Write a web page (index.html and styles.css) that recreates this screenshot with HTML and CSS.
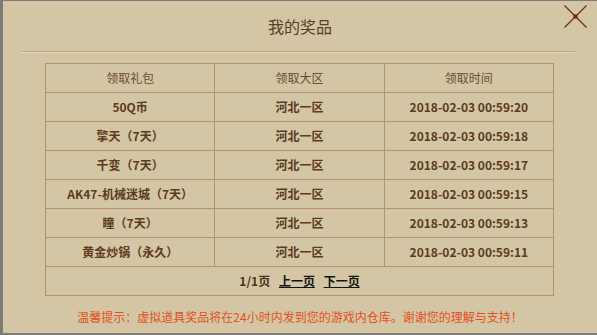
FILE: index.html
```html
<!DOCTYPE html>
<html lang="zh">
<head>
<meta charset="utf-8">
<title>我的奖品</title>
<link rel="stylesheet" href="styles.css">
</head>
<body>
<div class="backdrop">
  <div class="panel">
    <div class="head">
      <h1 class="title">我的奖品</h1>
      <button class="close" aria-label="关闭">
        <svg width="25" height="25" viewBox="0 0 25 25">
          <path d="M1.5 1.5 L23.5 23.5 M23.5 1.5 L1.5 23.5" stroke="#6a2a10" stroke-width="1.1" fill="none"/>
          <rect x="10.5" y="10.5" width="4" height="4" fill="#6a2a10"/>
        </svg>
      </button>
    </div>
    <div class="rule"></div>
    <table class="prizes">
      <thead>
        <tr><th>领取礼包</th><th>领取大区</th><th>领取时间</th></tr>
      </thead>
      <tbody>
        <tr><td>50Q币</td><td>河北一区</td><td>2018-02-03 00:59:20</td></tr>
        <tr><td>擎天（7天）</td><td>河北一区</td><td>2018-02-03 00:59:18</td></tr>
        <tr><td>千变（7天）</td><td>河北一区</td><td>2018-02-03 00:59:17</td></tr>
        <tr><td>AK47-机械迷城（7天）</td><td>河北一区</td><td>2018-02-03 00:59:15</td></tr>
        <tr><td>瞳（7天）</td><td>河北一区</td><td>2018-02-03 00:59:13</td></tr>
        <tr><td>黄金炒锅（永久）</td><td>河北一区</td><td>2018-02-03 00:59:11</td></tr>
        <tr class="pager"><td colspan="3">1/1页 <a href="#">上一页</a> <a href="#">下一页</a></td></tr>
      </tbody>
    </table>
    <p class="tip">温馨提示：虚拟道具奖品将在24小时内发到您的游戏内仓库。谢谢您的理解与支持！</p>
  </div>
</div>
</body>
</html>
```

FILE: styles.css
```css
html, body {
  margin: 0;
  padding: 0;
  width: 597px;
  height: 335px;
  overflow: hidden;
  background: #7d7b78;
  font-family: "Noto Sans CJK SC", "Noto Sans", sans-serif;
}
.backdrop {
  padding: 1px 0 0 3px;
}
.panel {
  background: #d4c6a4;
  height: 332px;
  box-sizing: border-box;
  padding: 0;
  display: flex;
  flex-direction: column;
}
.head {
  height: 50px;
  position: relative;
  display: flex;
  align-items: center;
  justify-content: center;
}
.title {
  margin: 0;
  font-size: 16px;
  font-weight: normal;
  color: #5a3e2c;
  line-height: 20px;
  padding-top: 0;
}
.close {
  position: absolute;
  right: 9px;
  top: 3px;
  padding: 0;
  border: 0;
  background: transparent;
  width: 25px;
  height: 25px;
}
.close svg { display: block; }
.rule {
  height: 1px;
  background: #b8a27d;
  border-bottom: 1px solid #e2d8bc;
  margin: 0 22px 0 19px;
}
.prizes {
  margin: 10px 0 0 42px;
  width: 509px;
  border-collapse: collapse;
  table-layout: fixed;
  color: #5b3a1e;
  font-size: 12px;
}
.prizes th, .prizes td {
  border: 1px solid #b88f6e;
  height: 28px;
  padding: 0;
  text-align: center;
  line-height: 16px;
}
.prizes th {
  font-weight: normal;
  color: #6b4c36;
}
.prizes td {
  font-weight: bold;
}
.pager td {
  color: #4a3220;
}
.pager a {
  color: #111;
  text-decoration: underline;
  margin-left: 6px;
}
.tip {
  margin: 13px 0 0 0;
  text-align: center;
  color: #e2501a;
  font-size: 12px;
  line-height: 16px;
}
```
